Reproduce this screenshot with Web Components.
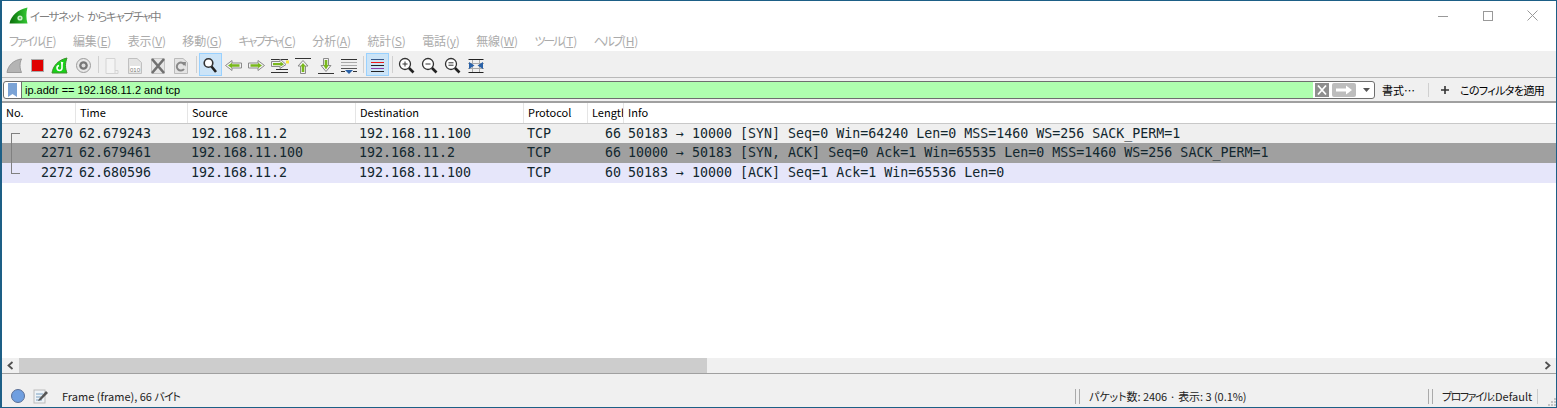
<!DOCTYPE html>
<html lang="ja">
<head>
<meta charset="utf-8">
<title>Wireshark</title>
<style>
  html, body { margin: 0; padding: 0; width: 1557px; height: 408px; overflow: hidden; background: #fff; }
  body { font-family: "Noto Sans CJK JP", sans-serif; font-size: 12px; color: #000; font-feature-settings: "palt"; }
</style>
</head>
<body>
<ws-app>
  <ws-titlebar>イーサネット からキャプチャ中</ws-titlebar>
  <ws-menubar></ws-menubar>
  <ws-toolbar></ws-toolbar>
  <ws-filterbar></ws-filterbar>
  <ws-packetlist></ws-packetlist>
  <ws-statusbar></ws-statusbar>
</ws-app>
<script>
class WsApp extends HTMLElement {
    connectedCallback() {
        this.attachShadow({ mode: 'open' });
        this.shadowRoot.innerHTML = `
            <style>
                :host {
                    display: flex;
                    flex-direction: column;
                    box-sizing: border-box;
                    width: 1557px;
                    height: 408px;
                    background: #f0f0f0;
                    border: 1px solid #1d5f86;
                    border-width: 1px 1px 1px 2px;
                }
            </style>
            <slot></slot>
        `;
    }
}

class WsTitlebar extends HTMLElement {
    connectedCallback() {
        this.attachShadow({ mode: 'open' });
        this.shadowRoot.innerHTML = `
            <style>
                :host {
                    display: flex;
                    align-items: center;
                    height: 29px;
                    background: #fff;
                    color: #7f7f7f;
                    font-size: 11.500px;
                    letter-spacing: -1.300px;
                    word-spacing: 3px;
                    flex: none;
                }
                svg.logo { margin: 0 1px 0 7px; flex: none; }
                .text { flex: 1; }
                .btn { width: 45px; height: 29px; display: flex; align-items: center; justify-content: center; }
                .btn:last-child { margin-right: 1px; }
            </style>
            <svg class="logo" width="20" height="18" viewBox="0 0 20 18">
                <defs>
                    <linearGradient id="fin" x1="0" y1="0" x2="1" y2="0">
                        <stop offset="0" stop-color="#0c6d0c"/>
                        <stop offset=".55" stop-color="#1f9f1f"/>
                        <stop offset="1" stop-color="#36c836"/>
                    </linearGradient>
                </defs>
                <path d="M.5 16.500C2 8.500 9 2.500 18.500 .5C17 6 17 11 18.500 16.500Z" fill="url(#fin)"/>
                <circle cx="11" cy="11" r="2.600" fill="#c9eec9"/>
                <circle cx="11" cy="11" r="1.100" fill="#5cb85c"/>
            </svg>
            <div class="text"><slot></slot></div>
            <div class="btn"><svg width="10" height="10"><path d="M0 5.500H10" stroke="#999"/></svg></div>
            <div class="btn"><svg width="10" height="10"><rect x=".5" y=".5" width="9" height="9" fill="none" stroke="#999"/></svg></div>
            <div class="btn"><svg width="11" height="11"><path d="M.5 .5L10.500 10.500M10.500 .5L.5 10.500" stroke="#999"/></svg></div>
        `;
    }
}

class WsMenubar extends HTMLElement {
    connectedCallback() {
        // the kana items run narrower than the kanji ones in the original
        const items = [['ファイル', 'F', 1], ['編集', 'E'], ['表示', 'V'], ['移動', 'G'], ['キャプチャ', 'C', 1], ['分析', 'A'],
            ['統計', 'S'], ['電話', 'y'], ['無線', 'W'], ['ツール', 'T', 1], ['ヘルプ', 'H', 1]];
        this.attachShadow({ mode: 'open' });
        this.shadowRoot.innerHTML = `
            <style>
                :host {
                    display: flex;
                    align-items: center;
                    gap: 16.600px;
                    height: 21px;
                    padding-left: 7px;
                    background: #fff;
                    color: #ababab;
                    font-size: 12px;
                    letter-spacing: -.2px;
                    flex: none;
                    border-bottom: 1px solid #f0f0f0;
                }
                u { text-underline-offset: 1px; }
                .k { letter-spacing: -2.100px; }
            </style>
            ${items.map(i => `<span><span class="${i[2] ? 'k' : ''}">${i[0]}</span>(<u>${i[1]}</u>)</span>`).join('')}
        `;
    }
}

// toolbar icons, drawn in a 23x25 box
const ICONS = {
    fin: '<path d="M4 20.500C5 13 11 8 18.500 7C16.500 11 16.500 16 18.500 20.500Z" fill="#b4b4b4" stroke="#9a9a9a"/>',
    stop: '<rect x="5.500" y="7.500" width="12" height="12" fill="#e00000" stroke="#aaa"/>',
    restart: '<path d="M3 21C4 14 9 8 18 6C16 11 16 16 18 21Z" fill="#19d119" stroke="#3c8f2c"/><path d="M13 10V16A2.500 2.500 0 1 1 10 13.500" fill="none" stroke="#fff" stroke-width="1.600"/><path d="M11.500 9.500L14.500 10.500L13 13Z" fill="#fff"/>',
    options: '<circle cx="11.500" cy="13.500" r="7" fill="#e8e8e8" stroke="#9c9c9c"/><circle cx="11.500" cy="13.500" r="4.300" fill="#777"/><circle cx="11.500" cy="13.500" r="2" fill="#ddd"/>',
    open: '<g transform="translate(-1.500 0)"><path d="M5.500 6.500H14.500V21.500H5.500Z" fill="#f4f4f4" stroke="#d4d4d4"/><path d="M14.500 18.500H17.500V21.500H14.500" fill="none" stroke="#d4d4d4"/></g>',
    save: '<g transform="translate(-1 0)"><path d="M4.500 6.500H13L17.500 10.500V21.500H4.500Z" fill="#e4e4e4" stroke="#c0c0c0"/><rect x="6" y="14" width="10" height="6" fill="#fff"/><text x="11" y="19.500" font-family="Liberation Sans" font-size="6" fill="#777" text-anchor="middle">010</text></g>',
    close: '<g transform="translate(-1 0)"><path d="M4.500 6.500H17.500V21.500H4.500Z" fill="#e6e6e6" stroke="#c4c4c4"/><path d="M5 7L17 21M17 7L5 21" stroke="#707070" stroke-width="2.600"/></g>',
    reload: '<g transform="translate(-1 0)"><path d="M4.500 6.500H13L17.500 10.500V21.500H4.500Z" fill="#e4e4e4" stroke="#bbb"/><path d="M14.500 13A4 4 0 1 0 14 17" fill="none" stroke="#888" stroke-width="2"/><path d="M12 10L16 10L15.500 14.500Z" fill="#888"/></g>',
    find: '<circle cx="9.500" cy="11" r="4.300" fill="#fff" stroke="#333" stroke-width="1.600"/><path d="M12.500 14.500L17 20" stroke="#222" stroke-width="2.600"/>',
    prev: '<path d="M3.500 13.500L10 8.500V11H19.500V16H10V18.500Z" fill="#f2f2f2" stroke="#8b8b8b"/><path d="M6 13.500L10 10.800V12.300H17.500V14.700H10V16.200Z" fill="#79b81c"/>',
    next: '<path d="M19.500 13.500L13 8.500V11H3.500V16H13V18.500Z" fill="#f2f2f2" stroke="#8b8b8b"/><path d="M17 13.500L13 10.800V12.300H5.500V14.700H13V16.200Z" fill="#79b81c"/>',
    goto: '<path d="M3 7.500H20M8 17.500H20M3 20.500H20" stroke="#333"/><path d="M3.500 9.500H12V7L18 12.500L12 16.500V14.500H3.500Z" fill="#f2f2f2" stroke="#8b8b8b"/><path d="M5 11H12.500V9.500L16 12.200L12.500 14.500V13.200H5Z" fill="#79b81c"/><rect x="18" y="8.500" width="3" height="3" fill="#f5e642"/>',
    first: '<path d="M4 6.500H20" stroke="#333"/><path d="M12 8.500L17 14H14.500V21.500H9.500V14H7Z" fill="#f2f2f2" stroke="#8b8b8b"/><path d="M12 11L14.800 14.500H13.300V20H10.700V14.500H9.200Z" fill="#79b81c"/>',
    last: '<path d="M4 21.500H20" stroke="#333"/><path d="M12 19.500L17 13.500H14.500V6.500H9.500V13.500H7Z" fill="#f2f2f2" stroke="#8b8b8b"/><path d="M12 17.500L14.800 13H13.300V8H10.700V13H9.200Z" fill="#79b81c"/>',
    bottom: '<path d="M4 7.500H20" stroke="#333"/><path d="M4 10.500H20M4 13.500H20" stroke="#aaa"/><path d="M4 16.500H20" stroke="#555"/><path d="M4 19.500H8M16 19.500H20" stroke="#333"/><path d="M8 18H16L12 22Z" fill="#2a62a8"/>',
    colorize: '<path d="M5 7.500H18" stroke="#3a5a8a"/><path d="M5 10.500H18" stroke="#f01818"/><path d="M5 13.500H18" stroke="#222"/><path d="M5 16.500H18" stroke="#8a3fa8"/><path d="M5 19.500H18" stroke="#222"/>',
    zoomin: '<circle cx="10" cy="12" r="5.500" fill="#fff" stroke="#333" stroke-width="1.300"/><path d="M7.500 12H12.500M10 9.500V14.500" stroke="#333"/><path d="M14 16L18.500 20.500" stroke="#222" stroke-width="2.600"/>',
    zoomout: '<circle cx="10" cy="12" r="5.500" fill="#fff" stroke="#333" stroke-width="1.300"/><path d="M7.500 12H12.500" stroke="#333"/><path d="M14 16L18.500 20.500" stroke="#222" stroke-width="2.600"/>',
    zoom1: '<circle cx="10" cy="12" r="5.500" fill="#fff" stroke="#333" stroke-width="1.300"/><path d="M7.500 10.800H12.500M7.500 13.200H12.500" stroke="#333"/><path d="M14 16L18.500 20.500" stroke="#222" stroke-width="2.600"/>',
    resize: '<path d="M4.500 7.500H19.500M4.500 20.500H19.500" stroke="#222"/><path d="M4 11.500H20M4 16.500H20M8.500 8V20M15.500 8V20" stroke="#aaa"/><path d="M5 10V17L10.500 13.500ZM19 10V17L13.500 13.500Z" fill="#2a62a8"/>'
};

class WsToolButton extends HTMLElement {
    connectedCallback() {
        const on = this.hasAttribute('on');
        this.attachShadow({ mode: 'open' });
        this.shadowRoot.innerHTML = `
            <style>
                :host { display: block; width: 23px; height: 25px; flex: none; position: relative; }
                .box { box-sizing: border-box; position: absolute; left: 0; top: 1px; width: 23px; height: 23px;
                       ${on ? 'background: #cce4f7; border: 1px solid #99d1ff;' : ''} }
                svg { position: absolute; left: 0; top: 0; }
            </style>
            <div class="box"></div>
            <svg width="23" height="25" viewBox="0 0 23 25">${ICONS[this.getAttribute('icon')]}</svg>
        `;
    }
}

class WsToolbar extends HTMLElement {
    connectedCallback() {
        const b = (n, on) => `<ws-tool-button icon="${n}"${on ? ' on' : ''}></ws-tool-button>`;
        const s = w => `<div class="sep" style="width:${w}px"><i></i></div>`;
        this.attachShadow({ mode: 'open' });
        this.shadowRoot.innerHTML = `
            <style>
                :host {
                    display: flex;
                    align-items: center;
                    height: 25px;
                    padding-left: 1px;
                    background: #f0f0f0;
                    border-bottom: 1px solid #b9b9b9;
                    flex: none;
                }
                .sep { height: 25px; display: flex; justify-content: center; align-items: center; flex: none; }
                .sep i { display: block; width: 1px; height: 17px; background: #d0d0d0; }
            </style>
            ${b('fin')}${b('stop')}${b('restart')}${b('options')}${s(7)}
            ${b('open')}${b('save')}${b('close')}${b('reload')}${s(5)}
            ${b('find', true)}${b('prev')}${b('next')}${b('goto')}${b('first')}${b('last')}${b('bottom')}${s(6)}
            ${b('colorize', true)}${s(6)}
            ${b('zoomin')}${b('zoomout')}${b('zoom1')}${b('resize')}
        `;
    }
}

class WsFilterbar extends HTMLElement {
    connectedCallback() {
        this.attachShadow({ mode: 'open' });
        this.shadowRoot.innerHTML = `
            <style>
                :host {
                    display: flex;
                    align-items: center;
                    box-sizing: border-box;
                    height: 23px;
                    padding: 3px 0 2px 1px;
                    background: #f0f0f0;
                    flex: none;
                    font-size: 11px;
                }
                .field {
                    box-sizing: border-box;
                    display: flex;
                    align-items: center;
                    width: 1372px;
                    height: 18px;
                    background: #fff;
                    border: 1px solid #6e6e6e;
                    border-radius: 3px;
                    flex: none;
                }
                .mark { width: 17px; display: flex; justify-content: center; align-items: center; flex: none; }
                .input {
                    flex: 1;
                    align-self: stretch;
                    background: #afffaf;
                    padding-left: 3px;
                    line-height: 16px;
                    font-family: "Liberation Sans", sans-serif;
                    border-left: 1px solid #6e6e6e;
                }
                .clear { width: 14px; height: 14px; margin: 0 3px 0 2px; display: flex; }
                .apply { width: 24px; height: 14px; margin-right: 6px; display: flex; }
                .drop { width: 9px; margin-right: 3px; display: flex; align-items: center; }
                .action { margin-left: 7px; width: 39px; flex: none; }
                .sep { width: 1px; height: 14px; background: #d0d0d0; margin: 0 12px 0 7px; flex: none; }
                .plus { width: 8px; height: 8px; margin-right: 11px; flex: none; }
                .apply-text { flex: none; letter-spacing: -.6px; }
            </style>
            <div class="field">
                <div class="mark"><svg width="9" height="14"><path d="M0 0H9V14L4.500 11L0 14Z" fill="#7ba3d6"/></svg></div>
                <div class="input">ip.addr == 192.168.11.2 and tcp</div>
                <div class="clear"><svg width="14" height="14"><rect width="14" height="14" fill="#8e8e8e"/><path d="M3 2.500L11 11.500M11 2.500L3 11.500" stroke="#fff" stroke-width="1.800"/></svg></div>
                <div class="apply"><svg width="24" height="14"><rect width="24" height="14" rx="2" fill="#bdbdbd"/><path d="M4 5.500H14V2.500L20 7L14 11.500V8.500H4Z" fill="#fff"/></svg></div>
                <div class="drop"><svg width="9" height="5"><path d="M1 0H8L4.500 4Z" fill="#555"/></svg></div>
            </div>
            <div class="action">書式…</div>
            <div class="sep"></div>
            <svg class="plus" viewBox="0 0 8 8"><path d="M4 0V8M0 4H8" stroke="#333" stroke-width="1.600"/></svg>
            <div class="apply-text">このフィルタを適用</div>
        `;
    }
}

class WsPacketRow extends HTMLElement {
    connectedCallback() {
        const c = this.getAttribute('cells').split('|');
        this.attachShadow({ mode: 'open' });
        this.shadowRoot.innerHTML = `
            <style>
                :host {
                    display: grid;
                    grid-template-columns: 74px 112px 168px 168px 64px 36px 1fr;
                    height: 20px;
                    line-height: 20px;
                    font-family: "DejaVu Sans Mono", monospace;
                    font-size: 13.300px;
                    font-feature-settings: normal;
                    white-space: pre;
                    color: #12272e;
                }
                div { padding-left: 3px; overflow: hidden; }
                .r { text-align: right; padding: 0 3px 0 0; }
                .i { padding-left: 4px; }
            </style>
            <div class="r">${c[0]}</div><div>${c[1]}</div><div>${c[2]}</div><div>${c[3]}</div><div>${c[4]}</div><div class="r">${c[5]}</div><div class="i">${c[6]}</div>
        `;
    }
}

class WsPacketList extends HTMLElement {
    connectedCallback() {
        const heads = ['No.', 'Time', 'Source', 'Destination', 'Protocol', 'Length', 'Info'];
        const rows = [
            ['#efefef;height:19px;line-height:19px', '2270|62.679243|192.168.11.2|192.168.11.100|TCP|66|50183 → 10000 [SYN] Seq=0 Win=64240 Len=0 MSS=1460 WS=256 SACK_PERM=1'],
            ['#a0a0a0', '2271|62.679461|192.168.11.100|192.168.11.2|TCP|66|10000 → 50183 [SYN, ACK] Seq=0 Ack=1 Win=65535 Len=0 MSS=1460 WS=256 SACK_PERM=1'],
            ['#e6e6fa', '2272|62.680596|192.168.11.2|192.168.11.100|TCP|60|50183 → 10000 [ACK] Seq=1 Ack=1 Win=65536 Len=0']
        ];
        this.attachShadow({ mode: 'open' });
        this.shadowRoot.innerHTML = `
            <style>
                :host {
                    display: flex;
                    flex-direction: column;
                    flex: 1;
                    min-height: 0;
                    position: relative;
                    background: #fff;
                    border-top: 2px solid #a0a0a0;
                }
                .head {
                    display: grid;
                    grid-template-columns: 74px 112px 168px 168px 64px 36px 1fr;
                    height: 20px;
                    line-height: 19px;
                    font-size: 11px;
                    background: #fff;
                    border-bottom: 1px solid #c8c8c8;
                    flex: none;
                }
                .head div { padding-left: 4px; border-right: 1px solid #e5e5e5; overflow: hidden; white-space: nowrap; }
                .head div:last-child { border-right: 0; }
                .rows { flex: 1; min-height: 0; }
                .link { position: absolute; left: 9px; top: 30px; width: 9px; height: 41px; border: 1px solid #808080; border-right: 0; box-sizing: border-box; }
                .bar { display: flex; align-items: stretch; height: 15px; background: #f0f0f0; flex: none; border-bottom: 1px solid #a0a0a0; }
                .arrow { width: 17px; display: flex; align-items: center; justify-content: center; flex: none; }
                .thumb { width: 688px; background: #cdcdcd; flex: none; }
                .track { flex: 1; }
            </style>
            <div class="head">${heads.map(h => `<div>${h}</div>`).join('')}</div>
            <div class="rows">${rows.map(r => `<ws-packet-row style="background:${r[0]}" cells="${r[1]}"></ws-packet-row>`).join('')}</div>
            <div class="link"></div>
            <div class="bar">
                <div class="arrow"><svg width="7" height="9"><path d="M5.500 1L1.500 4.500L5.500 8" fill="none" stroke="#505050" stroke-width="1.800"/></svg></div>
                <div class="thumb"></div>
                <div class="track"></div>
                <div class="arrow"><svg width="7" height="9"><path d="M1.500 1L5.500 4.500L1.500 8" fill="none" stroke="#505050" stroke-width="1.800"/></svg></div>
            </div>
        `;
    }
}

class WsStatusbar extends HTMLElement {
    connectedCallback() {
        this.attachShadow({ mode: 'open' });
        this.shadowRoot.innerHTML = `
            <style>
                :host {
                    display: flex;
                    align-items: center;
                    height: 33px;
                    padding-top: 11px;
                    box-sizing: border-box;
                    background: #f0f0f0;
                    font-size: 11px;
                    flex: none;
                    color: #222;
                }
                .led { margin-left: 8px; flex: none; }
                .note { margin-left: 7px; flex: none; }
                .frame { margin-left: 13px; flex: 1; }
                .k { letter-spacing: -1px; }
                .grip { width: 3px; height: 15px; border-left: 1px solid #aaa; border-right: 1px solid #aaa; flex: none; }
                .packets { margin-left: 9px; width: 339px; flex: none; letter-spacing: -.05px; }
                .profile { margin-left: 9px; width: 95px; flex: none; white-space: nowrap; }
                .end { width: 1px; height: 15px; background: #ccc; flex: none; }
                .size { width: 18px; height: 22px; flex: none; display: flex; align-items: flex-end; justify-content: flex-end; }
            </style>
            <svg class="led" width="16" height="16"><circle cx="8" cy="8" r="6.500" fill="#6f9fe0" stroke="#5a6f96"/></svg>
            <svg class="note" width="16" height="16"><rect x="1" y="2" width="11" height="13" fill="#eef3f7" stroke="#bbb"/><path d="M3 6H10M3 9H8M3 12H9" stroke="#7aa0c0"/><path d="M6 11L13 3L15 5L8 12L5 13Z" fill="#555"/></svg>
            <div class="frame">Frame (frame), 66 <span class="k">バイト</span></div>
            <div class="grip"></div>
            <div class="packets">パケット数: 2406 · 表示: 3 (0.1%)</div>
            <div class="grip"></div>
            <div class="profile"><span class="k" style="letter-spacing:-1.500px">プロファイル</span>:Default</div>
            <div class="end"></div>
            <div class="size"><svg width="10" height="10"><path d="M8 1H10V3H8ZM5 4H7V6H5ZM8 4H10V6H8ZM2 7H4V9H2ZM5 7H7V9H5ZM8 7H10V9H8Z" fill="#c4c4c4"/></svg></div>
        `;
    }
}

customElements.define('ws-app', WsApp);
customElements.define('ws-titlebar', WsTitlebar);
customElements.define('ws-menubar', WsMenubar);
customElements.define('ws-tool-button', WsToolButton);
customElements.define('ws-toolbar', WsToolbar);
customElements.define('ws-filterbar', WsFilterbar);
customElements.define('ws-packet-row', WsPacketRow);
customElements.define('ws-packetlist', WsPacketList);
customElements.define('ws-statusbar', WsStatusbar);
</script>
</body>
</html>
